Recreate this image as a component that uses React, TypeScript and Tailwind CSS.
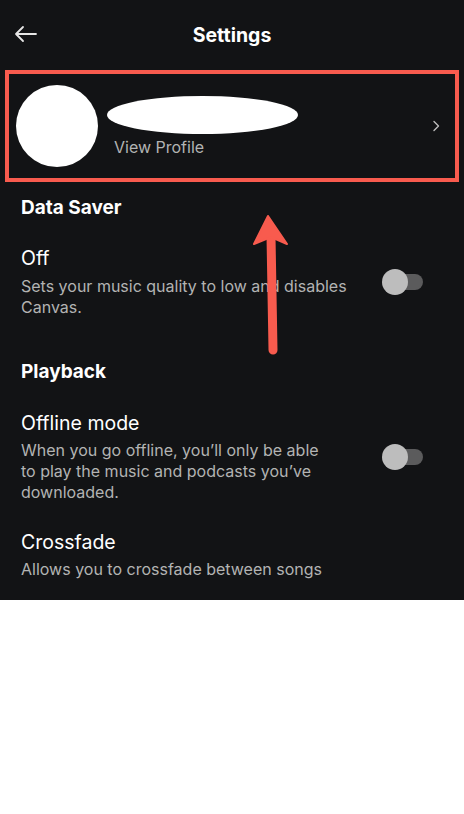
const font = { fontFamily: '"Inter", "Noto Sans", sans-serif' };

function Toggle() {
  return (
    <div className="relative mr-[20px] h-[26px] w-[41px] shrink-0">
      <div className="absolute right-0 top-[5px] h-[16px] w-[36px] rounded-full bg-[#5b5b5c]" />
      <div className="absolute left-0 top-0 h-[26px] w-[26px] rounded-full bg-[#bdbdbd]" />
    </div>
  );
}

export default function App() {
  return (
    <div className="h-[814px] w-[464px] bg-white" style={font}>
      <div className="relative h-[600px] bg-[#121315] text-white">
        <div className="relative flex h-[70px] items-center justify-center">
          <svg className="absolute left-[14px] top-[22px]" width="24" height="24" viewBox="0 0 24 24" fill="none" stroke="#e6e6e6" strokeWidth="1.8" strokeLinecap="round" strokeLinejoin="round">
            <path d="M22 12H2M9 5l-7 7 7 7" />
          </svg>
          <span className="text-[19.5px] font-bold leading-[24px]">Settings</span>
        </div>

        <div className="mx-[5px] flex h-[112px] items-center border-[4px] border-[#f85b4e]">
          <div className="ml-[7px] h-[82px] w-[82px] shrink-0 rounded-full bg-white" />
          <div className="ml-[16px] flex flex-1 flex-col">
            <div className="ml-[-7px] h-[38px] w-[191px] rounded-[50%] bg-white" />
            <span className="mt-[3px] text-[16px] leading-[20px] text-[#b3b3b3]">View Profile</span>
          </div>
          <svg className="mr-[14px]" width="10" height="12" viewBox="0 0 10 12" fill="none" stroke="#bdbdbd" strokeWidth="1.4" strokeLinecap="round" strokeLinejoin="round">
            <path d="M3 1.5l4.5 4.5L3 10.5" />
          </svg>
        </div>

        <div className="px-[21px]">
          <div className="mt-[14px] text-[19px] font-bold leading-[24px]">Data Saver</div>

          <div className="mt-[26px] flex items-center">
            <div className="flex-1">
              <div className="text-[19.5px] leading-[24px]">Off</div>
              <div className="mt-[6px] text-[16px] leading-[21px] text-[#b3b3b3]">
                Sets your music quality to low and disables
                <br />
                Canvas.
              </div>
            </div>
            <Toggle />
          </div>

          <div className="mt-[42px] text-[19px] font-bold leading-[24px]">Playback</div>

          <div className="mt-[27px] flex items-center">
            <div className="flex-1">
              <div className="text-[19.5px] leading-[24px]">Offline mode</div>
              <div className="mt-[5px] text-[16px] leading-[21px] text-[#b3b3b3]">
                When you go offline, you’ll only be able
                <br />
                to play the music and podcasts you’ve
                <br />
                downloaded.
              </div>
            </div>
            <Toggle />
          </div>

          <div className="mt-[27px] text-[19.5px] leading-[24px]">Crossfade</div>
          <div className="mt-[5px] text-[16px] leading-[21px] text-[#b3b3b3]">Allows you to crossfade between songs</div>
        </div>

        <svg className="pointer-events-none absolute inset-0" width="464" height="600" viewBox="0 0 464 600">
          <line x1="271" y1="236" x2="273" y2="350" stroke="#f85b4e" strokeWidth="9" strokeLinecap="round" />
          <polygon points="268,216 287,244 271,237 254,244" fill="#f85b4e" stroke="#f85b4e" strokeWidth="2" strokeLinejoin="round" />
        </svg>
      </div>
    </div>
  );
}
